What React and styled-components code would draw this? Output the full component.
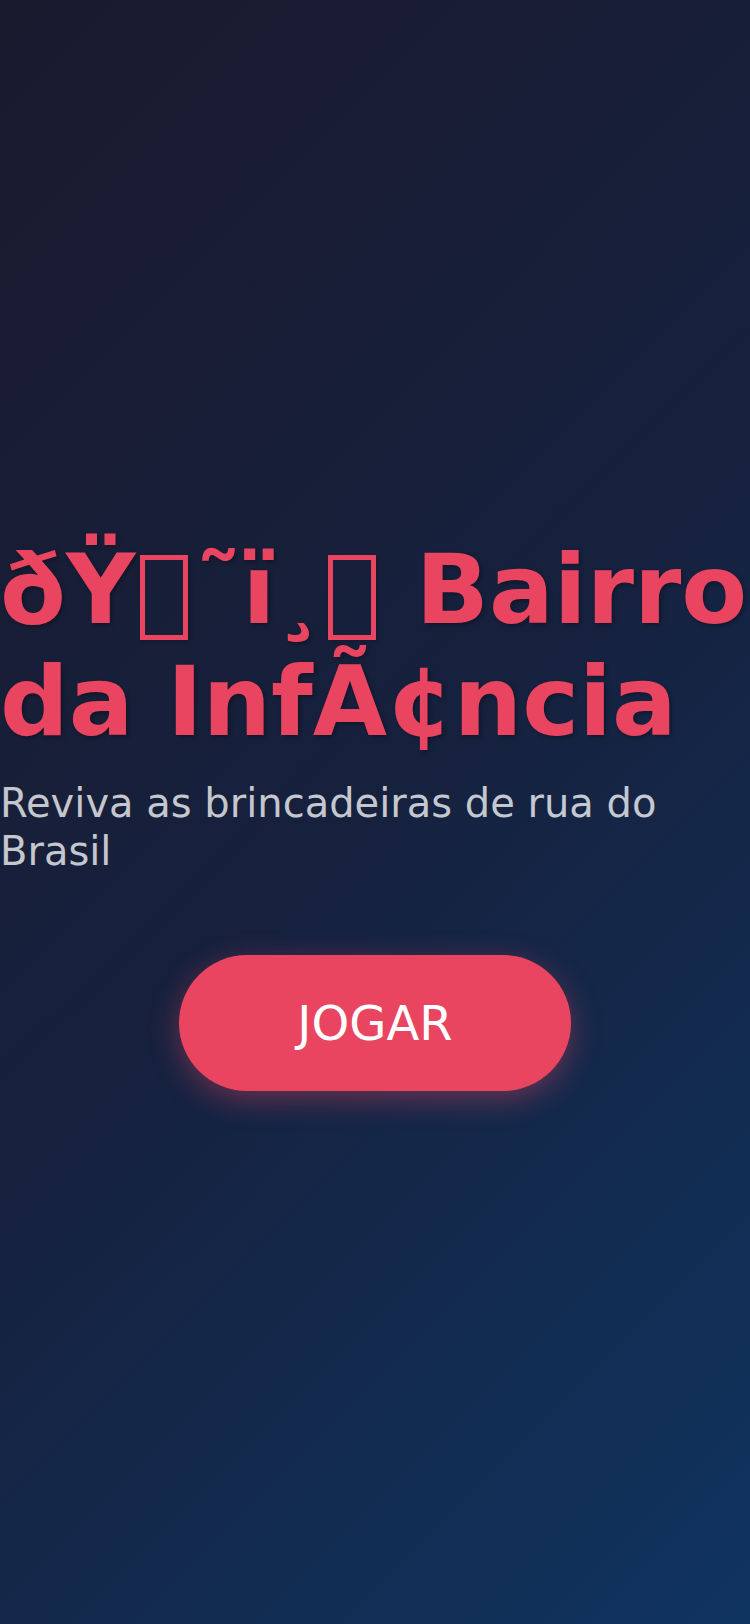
import React from 'react';
import styled, { createGlobalStyle } from 'styled-components';

const GlobalStyle = createGlobalStyle`
    html, body {
        margin: 0;
        padding: 0;
    }
    body {
        font-family: "DejaVu Sans", "Noto Sans", sans-serif;
        background: linear-gradient(135deg, #1a1a2e 0%, #16213e 50%, #0f3460 100%);
        min-height: 100vh;
    }
`;

const Screen = styled.main`
    min-height: 100vh;
    display: flex;
    flex-direction: column;
    justify-content: center;
    box-sizing: border-box;
`;

const Title = styled.h1`
    margin: 0 0 21px;
    font-size: 96px;
    font-weight: 700;
    color: #e94560;
    text-shadow: 2px 2px 4px rgba(0, 0, 0, 0.3);
`;

// caixa de glifo em falta (tofu)
const Tofu = styled.span`
    display: inline-block;
    box-sizing: border-box;
    width: 48px;
    height: 85px;
    margin: 0 6px 0 5px;
    border: 5px solid #e94560;
    vertical-align: -17px;
    box-shadow: 2px 2px 4px rgba(0, 0, 0, 0.2);
`;

const Subtitle = styled.p`
    margin: 0 0 80px;
    font-size: 40px;
    line-height: 48px;
    color: rgba(255, 255, 255, 0.76);
`;

const PlayButton = styled.button`
    align-self: center;
    border: none;
    border-radius: 70px;
    padding: 40px 118px;
    background: #e94560;
    color: #fff;
    font-family: "DejaVu Sans", sans-serif;
    font-size: 48px;
    cursor: pointer;
    box-shadow: 0 8px 30px rgba(233, 69, 96, 0.4);
`;

export default function App() {
    return (
        <>
            <GlobalStyle />
            <Screen>
                <Title>
                    {'\u00F0\u0178'}<Tofu />{'\u02DC\u00EF\u00B8'}<Tofu />{' Bairro da Inf\u00C3\u00A2ncia'}
                </Title>
                <Subtitle>Reviva as brincadeiras de rua do Brasil</Subtitle>
                <PlayButton>JOGAR</PlayButton>
            </Screen>
        </>
    );
}
